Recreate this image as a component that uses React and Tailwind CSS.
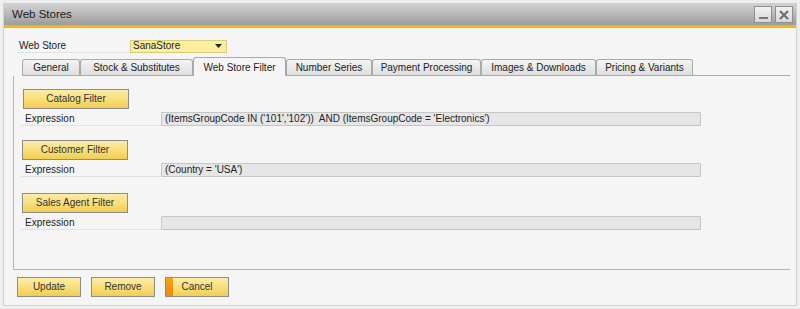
const font = { fontFamily: '"Liberation Sans", Arial, sans-serif' }

const tabs = [
  { label: 'General', w: 'w-[58px]' },
  { label: 'Stock & Substitutes', w: 'w-[113px]' },
  { label: 'Web Store Filter', w: 'w-[93px]', active: true },
  { label: 'Number Series', w: 'w-[86px]' },
  { label: 'Payment Processing', w: 'w-[109px]' },
  { label: 'Images & Downloads', w: 'w-[115px]' },
  { label: 'Pricing & Variants', w: 'w-[97px]' },
]

function YellowButton({ children, className = '', accent = false }) {
  return (
    <button
      className={`relative h-[20px] border border-[#8c8c8c] bg-gradient-to-b from-[#fdeca6] via-[#f9df7c] to-[#f3cd52] text-[10px] text-[#333] leading-none ${className}`}
    >
      {accent && <span className="absolute left-0 top-0 bottom-0 w-[7px] bg-gradient-to-b from-[#f7a21c] to-[#ee8a00]" />}
      <span className="relative">{children}</span>
    </button>
  )
}

function ExpressionRow({ value }) {
  return (
    <div className="flex items-center h-[14px] ml-[7px]">
      <div className="w-[140px] h-[14px] border-b border-[#dde2e8] text-[10px] text-[#222] pl-[4px] leading-[13px]">
        Expression
      </div>
      <div className="w-[540px] h-[14px] bg-[#e6e6e6] border border-[#c6c6c6] rounded-[1px] text-[10px] text-[#222] pl-[3px] leading-[12px] whitespace-pre">
        {value}
      </div>
    </div>
  )
}

export default function App() {
  return (
    <div className="w-[800px] h-[309px] bg-[#eeeeee] p-[3px]" style={font}>
      <div className="h-full flex flex-col bg-[#f5f5f5] border border-[#cfcfcf]">
        {/* Title bar */}
        <div className="h-[21px] flex items-center justify-between pl-[8px] pr-[3px] bg-gradient-to-b from-[#d2d2d2] to-[#9c9c9c]">
          <span className="text-[11.5px] text-[#1c1c1c]">Web Stores</span>
          <div className="flex gap-[3px]">
            <div className="w-[18px] h-[17px] border border-[#8e8e8e] bg-gradient-to-b from-[#f2f2f2] to-[#d6d6d6] flex items-end justify-center pb-[3px]">
              <span className="block w-[9px] h-[2px] bg-[#777]" />
            </div>
            <div className="w-[18px] h-[17px] border border-[#8e8e8e] bg-gradient-to-b from-[#f2f2f2] to-[#d6d6d6] flex items-center justify-center">
              <svg width="10" height="10" viewBox="0 0 10 10">
                <path d="M1 1 L9 9 M9 1 L1 9" stroke="#6e6e6e" strokeWidth="2" />
              </svg>
            </div>
          </div>
        </div>
        <div className="h-[3px] bg-[#f6b40c]" />

        {/* Web Store selector */}
        <div className="flex items-center mt-[11px] ml-[13px] h-[14px]">
          <div className="w-[113px] h-[14px] border-b border-[#dde2e8] text-[10px] text-[#222] pl-[2px] leading-[13px]">
            Web Store
          </div>
          <div className="w-[97px] h-[13px] bg-[#fbee9f] border border-[#d9cb7c] flex items-center justify-between px-[2px]">
            <span className="text-[10px] text-[#222] leading-none">SanaStore</span>
            <svg width="7" height="4" viewBox="0 0 7 4" className="mr-[2px]">
              <path d="M0 0 L7 0 L3.5 4 Z" fill="#222" />
            </svg>
          </div>
        </div>

        {/* Tabs */}
        <div className="flex items-end mt-[4px] ml-[18px] mr-[6px] h-[19px] border-b border-[#a9a9a9]">
          {tabs.map(t =>
            t.active ? (
              <div
                key={t.label}
                className={`${t.w} h-[19px] -mb-px bg-[#f5f5f5] border border-b-0 border-[#a9a9a9] rounded-t-[3px] flex items-center justify-center text-[10px] text-[#222]`}
              >
                {t.label}
              </div>
            ) : (
              <div
                key={t.label}
                className={`${t.w} h-[16px] bg-gradient-to-b from-[#f4f4f4] to-[#dedede] border border-b-0 border-[#a9a9a9] rounded-t-[3px] flex items-center justify-center text-[10px] text-[#222]`}
              >
                {t.label}
              </div>
            )
          )}
        </div>

        {/* Panel */}
        <div className="h-[194px] ml-[9px] mr-[6px] border-l border-b border-[#b4b4b4] flex flex-col">
          <YellowButton className="w-[106px] mt-[13px] ml-[9px]">Catalog Filter</YellowButton>
          <div className="mt-[3px]">
            <ExpressionRow value="(ItemsGroupCode IN ('101','102'))  AND (ItemsGroupCode = 'Electronics')" />
          </div>
          <YellowButton className="w-[106px] mt-[14px] ml-[8px]">Customer Filter</YellowButton>
          <div className="mt-[3px]">
            <ExpressionRow value="(Country = 'USA')" />
          </div>
          <YellowButton className="w-[106px] mt-[16px] ml-[8px]">Sales Agent Filter</YellowButton>
          <div className="mt-[3px]">
            <ExpressionRow value="" />
          </div>
        </div>

        {/* Footer buttons */}
        <div className="flex gap-[10px] mt-[7px] ml-[13px]">
          <YellowButton className="w-[64px]">Update</YellowButton>
          <YellowButton className="w-[64px]">Remove</YellowButton>
          <YellowButton className="w-[64px]" accent>Cancel</YellowButton>
        </div>
      </div>
    </div>
  )
}
